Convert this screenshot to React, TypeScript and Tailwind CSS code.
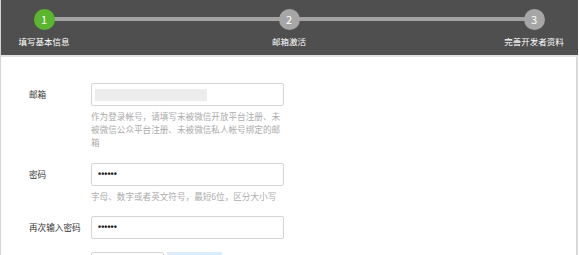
import React from "react";

const steps = [
  { n: 1, label: "填写基本信息", active: true },
  { n: 2, label: "邮箱激活", active: false },
  { n: 3, label: "完善开发者资料", active: false },
];

function Field({ label, children, hint, top }: { label: string; children: React.ReactNode; hint?: React.ReactNode; top: string }) {
  return (
    <div className={`flex ${top}`}>
      <div className="flex h-[23px] w-[90px] shrink-0 items-center pl-[28px] text-[8.6px] text-[#333]">{label}</div>
      <div className="flex flex-col">
        {children}
        {hint ? <div className="mt-[4px] w-[194px] text-[8.6px] leading-[13px] text-[#ababab]">{hint}</div> : null}
      </div>
    </div>
  );
}

function Input({ dots, blur }: { dots?: boolean; blur?: boolean }) {
  return (
    <div className="flex h-[23px] w-[193px] items-center rounded-[2px] border border-[#d5d5d5] bg-white px-[3px]">
      {blur ? <div className="h-[12px] w-[112px] bg-[#ececec]" /> : null}
      {dots ? <span className="pl-[3px] font-['Liberation_Sans',sans-serif] text-[9px] font-bold text-[#222]">••••••</span> : null}
    </div>
  );
}

export default function App() {
  return (
    <div className="h-[255px] w-[579px] overflow-hidden bg-white font-['Noto_Sans_CJK_SC','Liberation_Sans',sans-serif]">
      <div className="w-[578px] border-l border-[#d3d3d3]">
        <div className="relative h-[55px] bg-[#4f4f4f]">
          <div className="absolute left-[42px] right-[44px] top-[17px] h-[4px] bg-[#a3a3a3]" />
          <div className="relative flex justify-between pl-[12px] pr-[13px] pt-[9px]">
            {steps.map((s) => (
              <div key={s.n} className="flex w-[62px] flex-col items-center">
                <div
                  className={`flex h-[21px] w-[21px] items-center justify-center rounded-full text-[11px] text-white ${
                    s.active ? "bg-[#5bb52f]" : "bg-[#a6a6a6]"
                  }`}
                >
                  {s.n}
                </div>
                <div className="mt-[5px] whitespace-nowrap text-[8.5px] leading-[12px] text-white">{s.label}</div>
              </div>
            ))}
          </div>
        </div>
        <div className="h-[2px] bg-[#e2e2e2]" />
        <div className="h-[200px] border-r-2 border-[#d8d8d8]">
          <Field
            label="邮箱"
            top="pt-[26px]"
            hint={<>作为登录帐号，请填写未被微信开放平台注册、未被微信公众平台注册、未被微信私人帐号绑定的邮箱</>}
          >
            <Input blur />
          </Field>
          <Field label="密码" top="pt-[14px]" hint="字母、数字或者英文符号，最短6位，区分大小写">
            <Input dots />
          </Field>
          <Field label="再次输入密码" top="pt-[13px]">
            <Input dots />
          </Field>
          <div className="flex pl-[90px] pt-[13px]">
            <div className="h-[23px] w-[73px] rounded-[2px] border border-[#d5d5d5]" />
            <div className="ml-[3px] h-[23px] w-[55px] bg-[#dcedf9]" />
          </div>
        </div>
      </div>
    </div>
  );
}
